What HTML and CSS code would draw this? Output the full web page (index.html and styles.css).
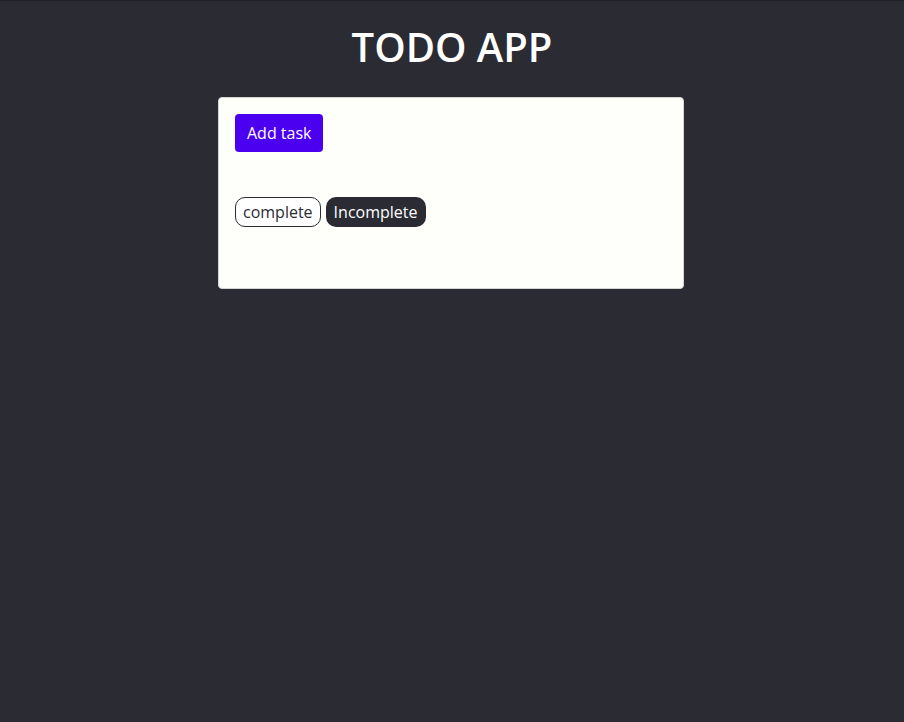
FILE: index.html
```html
<!DOCTYPE html>
<html lang="en">
<head>
<meta charset="utf-8">
<title>Todo App</title>
<link rel="stylesheet" href="styles.css">
</head>
<body>
  <h1 class="title">TODO APP</h1>
  <main class="card">
    <button class="add-btn">Add task</button>
    <div class="filters">
      <span class="pill pill-outline">complete</span>
      <span class="pill pill-dark">Incomplete</span>
    </div>
  </main>
</body>
</html>
```
FILE: styles.css
```css
html, body {
  margin: 0;
  padding: 0;
}
body {
  background: #2a2b33;
  font-family: "Open Sans", "Noto Sans", sans-serif;
  min-height: 722px;
  border-top: 1px solid #22232a;
  box-sizing: border-box;
}
.title {
  margin: 0;
  padding-top: 22px;
  height: 74px;
  box-sizing: border-box;
  text-align: center;
  color: #ffffff;
  font-size: 40px;
  font-weight: 600;
  line-height: 48px;
  letter-spacing: 0;
}
.card {
  width: 466px;
  height: 192px;
  box-sizing: border-box;
  margin: 22px auto 0 calc(50% - 234px);
  background: #fefefa;
  border: 1px solid #d6d6d0;
  border-radius: 4px;
  padding: 16px;
}
.add-btn {
  display: block;
  height: 38px;
  padding: 0 12px;
  border: none;
  border-radius: 4px;
  background: #4b00f0;
  color: #ffffff;
  font-family: inherit;
  font-size: 16px;
}
.filters {
  display: flex;
  gap: 5px;
  margin-top: 45px;
}
.pill {
  display: inline-flex;
  align-items: center;
  height: 30px;
  box-sizing: border-box;
  padding: 0 7px;
  border-radius: 10px;
  font-size: 16px;
}
.pill-outline {
  border: 1px solid #2a2b33;
  color: #2a2b33;
  background: #ffffff;
}
.pill-dark {
  background: #2a2b33;
  color: #ffffff;
  padding: 0 8px;
}
```
